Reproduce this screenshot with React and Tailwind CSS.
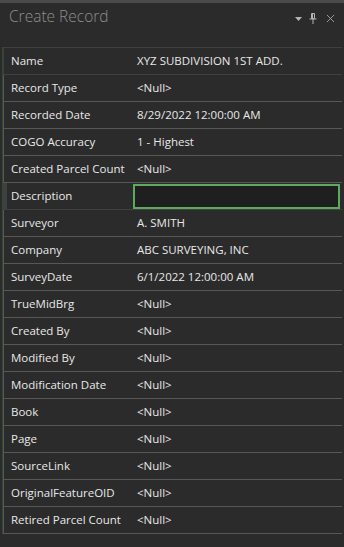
import { X } from 'lucide-react'

const rows = [
  { label: 'Name', value: 'XYZ SUBDIVISION 1ST ADD.', mark: 'green' },
  { label: 'Record Type', value: '<Null>' },
  { label: 'Recorded Date', value: '8/29/2022 12:00:00 AM' },
  { label: 'COGO Accuracy', value: '1 - Highest' },
  { label: 'Created Parcel Count', value: '<Null>' },
  { label: 'Description', value: '', edit: true },
  { label: 'Surveyor', value: 'A. SMITH' },
  { label: 'Company', value: 'ABC SURVEYING, INC' },
  { label: 'SurveyDate', value: '6/1/2022 12:00:00 AM' },
  { label: 'TrueMidBrg', value: '<Null>' },
  { label: 'Created By', value: '<Null>' },
  { label: 'Modified By', value: '<Null>' },
  { label: 'Modification Date', value: '<Null>' },
  { label: 'Book', value: '<Null>' },
  { label: 'Page', value: '<Null>' },
  { label: 'SourceLink', value: '<Null>' },
  { label: 'OriginalFeatureOID', value: '<Null>' },
  { label: 'Retired Parcel Count', value: '<Null>' },
]

function PinIcon() {
  return (
    <svg width="8" height="11" viewBox="0 0 8 11" fill="none" stroke="#b4b4b4" strokeWidth="1">
      <path d="M2.5 0.5h3v5h-3z" />
      <path d="M0.5 6h7" />
      <path d="M4 6v5" />
      <path d="M3.5 1v4.5" />
    </svg>
  )
}

function Row({ row }) {
  let edge = 'border-l border-[#575757]'
  if (row.mark === 'green') edge = 'border-l border-[#4d8a4d]'
  if (row.edit) edge = 'border-l-[4px] border-[#8a8a8a]'
  return (
    <div className={`flex h-[27px] border-b border-[#404040] ${edge}`}>
      <div className={`${row.edit ? 'w-[126px] pl-[4px]' : 'w-[129px] pl-[7px]'} flex items-center text-[#e8e8e8] whitespace-nowrap`}>
        {row.label}
      </div>
      {row.edit ? (
        <div className="flex-1 pr-[2px] pt-[1px]">
          <div className="h-[25px] border-2 border-[#5fa85f] bg-[#1f1f1f]"></div>
        </div>
      ) : (
        <div className="flex-1 pl-[4px] flex items-center text-[#e8e8e8] whitespace-nowrap">{row.value}</div>
      )}
    </div>
  )
}

export default function App() {
  return (
    <div className="w-[344px] h-[547px] bg-[#2b2b2b] border-t-[3px] border-[#4b4b4b] overflow-hidden text-[11.5px] font-['Open_Sans',sans-serif]">
      <div className="flex h-[44px] items-start pl-[9px] pr-[7px] pt-[2px]">
        <div className="flex-1 text-[15.5px] text-[#8e8e8e] font-light">Create Record</div>
        <div className="flex items-center gap-[7px] pt-[7px]">
          <svg width="7" height="4" viewBox="0 0 7 4"><path d="M0 0h7L3.5 4z" fill="#b4b4b4" /></svg>
          <PinIcon />
          <X size={13} color="#b4b4b4" strokeWidth={1.5} />
        </div>
      </div>
      <div className="mx-[2px] border-l border-[#2f4a33] border-t border-t-[#404040]">
        {rows.map((r) => (
          <Row key={r.label} row={r} />
        ))}
      </div>
    </div>
  )
}
